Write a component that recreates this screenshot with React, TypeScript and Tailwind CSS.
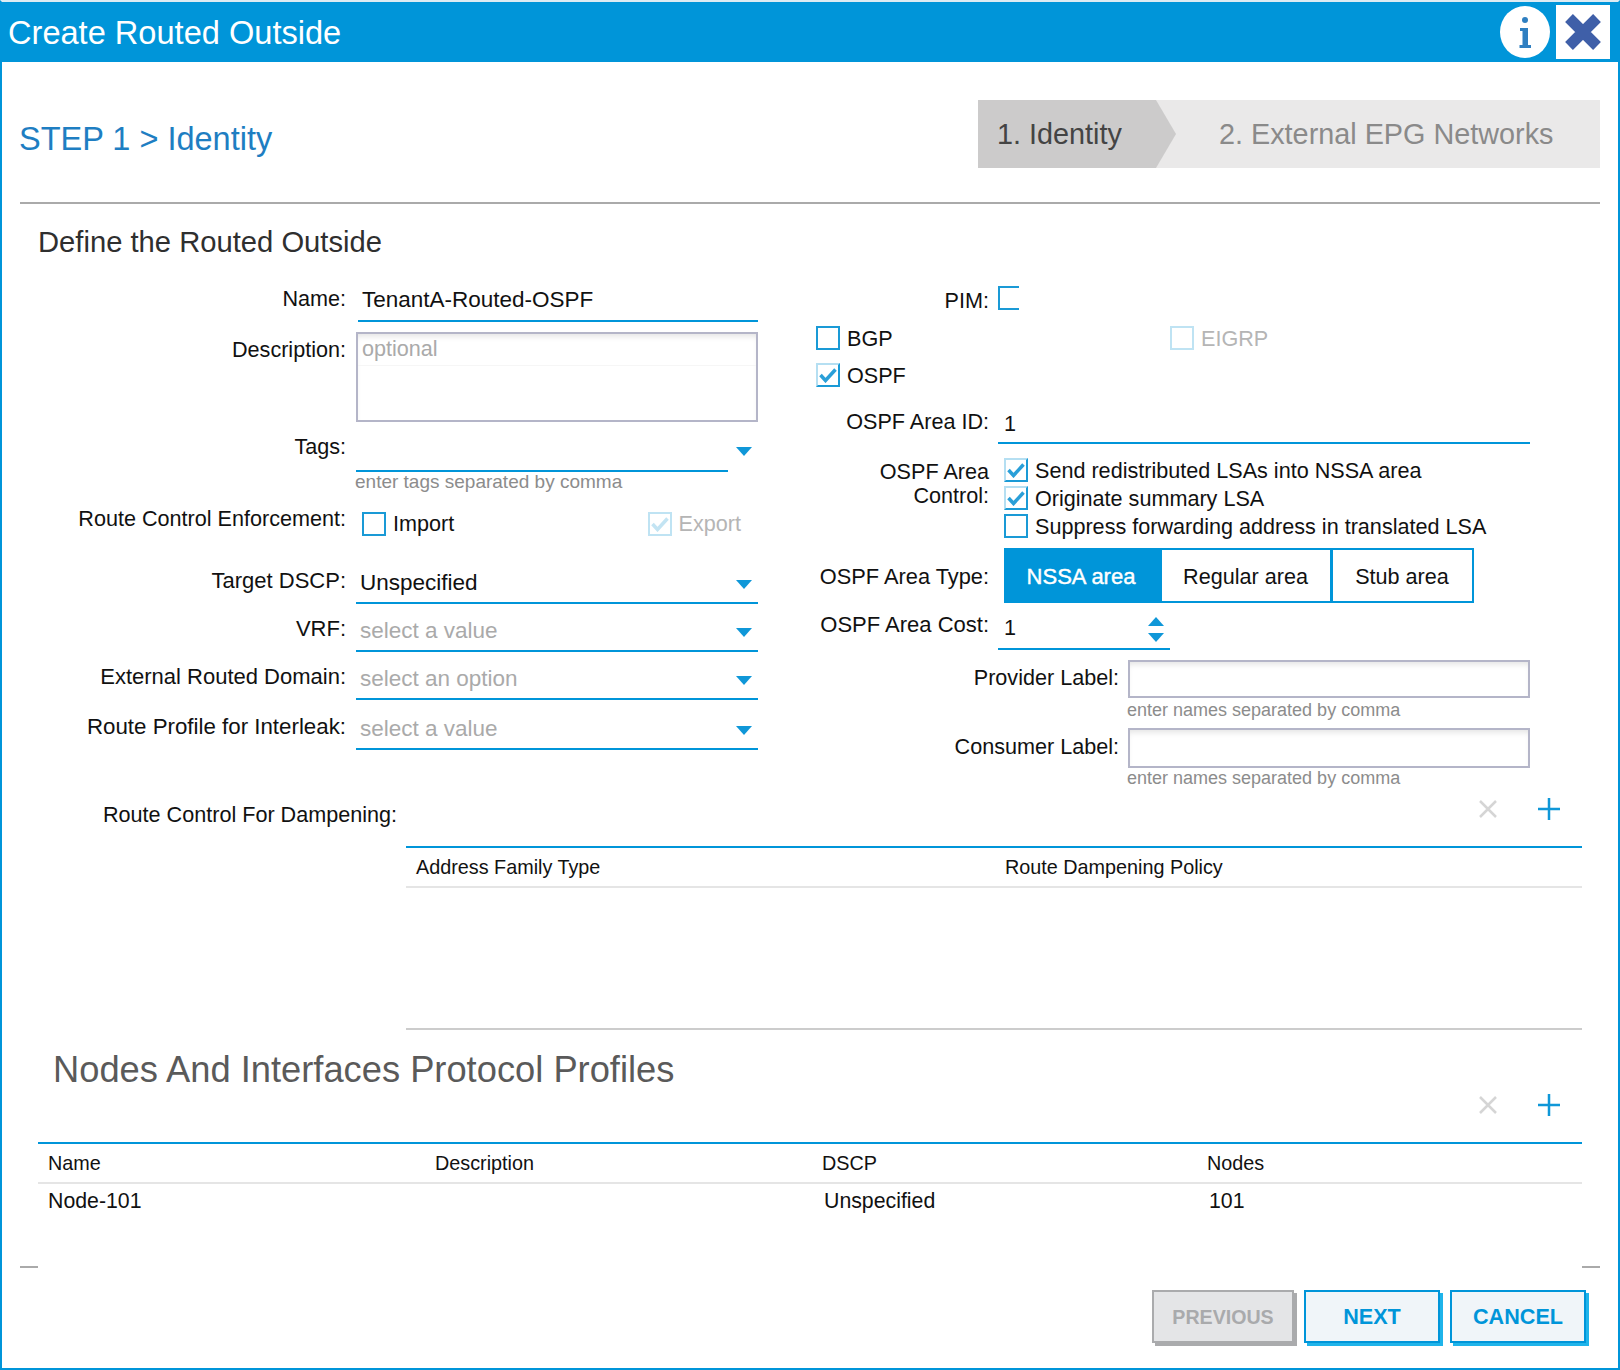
import type { ReactNode } from "react";

function Arrow({ up = false }: { up?: boolean }) {
  return (
    <svg width="16" height="9" viewBox="0 0 16 9" className={up ? "rotate-180" : ""}>
      <path d="M0 0h16L8 9z" fill="#0f97d8" />
    </svg>
  );
}

function Checkbox({ checked = false, muted = false, lift = false }: { checked?: boolean; muted?: boolean; lift?: boolean }) {
  return (
    <span
      className={[
        "flex h-[24px] w-[24px] shrink-0 items-center justify-center border-2",
        lift ? "-mt-[2px]" : "",
        muted ? "border-[#bfe3f3]" : checked ? "border-[#b5dff2] border-r-[#1a9ad6] border-b-[#1a9ad6]" : "border-[#1a9ad6]",
      ].join(" ")}
    >
      {checked && (
        <svg width="18" height="16" viewBox="0 0 18 16">
          <path d="M1.5 8l5 5.5L16.5 2.5" fill="none" stroke={muted ? "#c3e4f3" : "#2a9fd8"} strokeWidth="3.5" />
        </svg>
      )}
    </span>
  );
}

function Option({ label, checked, muted, lift }: { label: string; checked?: boolean; muted?: boolean; lift?: boolean }) {
  return (
    <div className="flex items-center gap-[7px]">
      <Checkbox checked={checked} muted={muted} lift={lift} />
      <span className={muted ? "text-[#b5b5b5]" : ""}>{label}</span>
    </div>
  );
}

function Label({ children, width, className = "" }: { children: ReactNode; width: string; className?: string }) {
  return <div className={`${width} shrink-0 text-right ${className}`}>{children}</div>;
}

function SelectRow({ label, value, placeholder, tall }: { label: string; value?: string; placeholder?: string; tall?: boolean }) {
  return (
    <div className={`flex items-end gap-[10px] ${tall ? "h-[50px]" : "h-[48px]"}`}>
      <Label width="w-[326px]" className={`pb-[10px] ${tall ? "text-[22.3px]" : "text-[22px]"}`}>{label}</Label>
      <div className="flex h-full w-[402px] items-end justify-between border-b-2 border-[#0095d9] pb-[6px] pl-[4px] pr-[6px] text-[22.5px]">
        <span className={value ? "" : "text-[#aaaaaa]"}>{value ?? placeholder}</span>
        <span className="mb-[7px]"><Arrow /></span>
      </div>
    </div>
  );
}

function TextBox({ className = "" }: { className?: string }) {
  return <div className={`w-[402px] border-2 border-[#b4b5c8] shadow-[inset_0_5px_6px_-3px_rgba(0,0,0,0.12)] ${className}`} />;
}

function TableActions() {
  return (
    <div className="flex h-[22px] items-center justify-end gap-[41px] pr-[22px]">
      <svg width="18" height="18" viewBox="0 0 18 18">
        <path d="M1 1l16 16M17 1L1 17" stroke="#d5d5d5" strokeWidth="2.5" />
      </svg>
      <svg width="22" height="22" viewBox="0 0 22 22">
        <path d="M0 11h22M11 0v22" stroke="#0f97d8" strokeWidth="2.5" />
      </svg>
    </div>
  );
}

function LeftColumn() {
  return (
    <div className="w-[796px] shrink-0">
      <div className="flex h-[42px] items-end gap-[12px]">
        <Label width="w-[326px]" className="pb-[10px]">Name:</Label>
        <div className="h-full w-[400px] border-b-2 border-[#0095d9] pb-[8px] pl-[4px] pt-[7px] text-[22.5px]">TenantA-Routed-OSPF</div>
      </div>
      <div className="mt-[10px] flex gap-[10px]">
        <Label width="w-[326px]" className="pt-[5px]">Description:</Label>
        <div className="h-[90px] w-[402px] border-2 border-[#b4b5c8] shadow-[inset_0_5px_6px_-3px_rgba(0,0,0,0.12)]">
          <div className="h-[32px] border-b border-[#f6f6f6] pl-[4px] pt-[2px] text-[#aaaaaa]">optional</div>
        </div>
      </div>
      <div className="flex h-[50px] items-end gap-[10px]">
        <Label width="w-[326px]" className="pb-[12px]">Tags:</Label>
        <div className="relative h-full w-[372px] border-b-2 border-[#0095d9]">
          <span className="absolute left-[380px] top-[25px]"><Arrow /></span>
        </div>
      </div>
      <div className="ml-[335px] h-[20px] text-[19px] leading-[20px] text-[#8c8c8c]">enter tags separated by comma</div>
      <div className="mt-[16px] flex h-[36px] items-start gap-[10px]">
        <Label width="w-[326px]" className="-mt-[2px]">Route Control Enforcement:</Label>
        <div className="flex w-[385px] justify-between pl-[6px] pt-[3px]">
          <Option label="Import" />
          <Option label="Export" checked muted />
        </div>
      </div>
      <div className="mt-[12px]">
        <SelectRow label="Target DSCP:" value="Unspecified" />
        <SelectRow label="VRF:" placeholder="select a value" />
        <SelectRow label="External Routed Domain:" placeholder="select an option" />
        <SelectRow label="Route Profile for Interleak:" placeholder="select a value" tall />
      </div>
    </div>
  );
}

function RightColumn() {
  return (
    <div className="w-[766px]">
      <div className="flex h-[36px] items-start gap-[9px]">
        <Label width="w-[173px]" className="pt-[8px]">PIM:</Label>
        <span className="mt-[6px] h-[24px] w-[21px] border-2 border-r-0 border-[#1a9ad6]" />
      </div>
      <div className="mt-[10px] flex">
        <div className="w-[354px]"><Option label="BGP" lift /></div>
        <Option label="EIGRP" muted lift />
      </div>
      <div className="mt-[11px]"><Option label="OSPF" checked lift /></div>
      <div className="mt-[9px] flex h-[46px] items-end gap-[9px]">
        <Label width="w-[173px]" className="pb-[9px]">OSPF Area ID:</Label>
        <div className="h-full w-[532px] border-b-2 border-[#0095d9] pb-[6px] pl-[6px] pt-[13px]">1</div>
      </div>
      <div className="mt-[14px] flex gap-[15px]">
        <Label width="w-[173px]" className="pt-[2px] leading-[24px]">OSPF Area<br />Control:</Label>
        <div className="flex flex-col gap-[2px]">
          <Option label="Send redistributed LSAs into NSSA area" checked lift />
          <Option label="Originate summary LSA" checked lift />
          <Option label="Suppress forwarding address in translated LSA" lift />
        </div>
      </div>
      <div className="mt-[8px] flex h-[55px] items-center gap-[15px]">
        <Label width="w-[173px]" className="pt-[3px] text-[21.8px]">OSPF Area Type:</Label>
        <div className="flex h-full border-2 border-[#0095d9]">
          <div className="flex w-[156px] items-center justify-center bg-[#0095d9] pr-[6px] pt-[3px] text-[22px] text-white [-webkit-text-stroke:0.4px_white]">NSSA area</div>
          <div className="flex w-[171px] items-center justify-center border-r-[3px] border-[#0095d9] pr-[1px] pt-[3px]">Regular area</div>
          <div className="flex w-[139px] items-center justify-center pr-[1px] pt-[3px]">Stub area</div>
        </div>
      </div>
      <div className="flex h-[47px] items-end gap-[9px]">
        <Label width="w-[173px]" className="pb-[12px] text-[22px]">OSPF Area Cost:</Label>
        <div className="flex h-full w-[172px] items-end justify-between border-b-2 border-[#0095d9] pb-[6px] pl-[6px] pr-[6px]">
          <span className="pb-[1px]">1</span>
          <span className="flex flex-col gap-[7px]">
            <Arrow up />
            <Arrow />
          </span>
        </div>
      </div>
      <div className="mt-[10px] flex gap-[9px]">
        <Label width="w-[303px]" className="pt-[5px]">Provider Label:</Label>
        <div>
          <TextBox className="h-[38px]" />
          <div className="-ml-[1px] h-[30px] text-[18px] leading-[24px] text-[#8c8c8c]">enter names separated by comma</div>
        </div>
      </div>
      <div className="flex gap-[9px]">
        <Label width="w-[303px]" className="pt-[6px]">Consumer Label:</Label>
        <div>
          <TextBox className="h-[40px]" />
          <div className="-ml-[1px] h-[23px] text-[18px] leading-[20px] text-[#8c8c8c]">enter names separated by comma</div>
        </div>
      </div>
    </div>
  );
}

export default function App() {
  return (
    <div className="flex h-[1370px] w-[1620px] flex-col overflow-hidden border-x-2 border-b-2 border-t-2 border-[#0095d9] border-t-[#dcebf3] bg-white text-[21.6px] leading-[26px] text-[#111111] [font-family:'Liberation_Sans',sans-serif]">
      <header className="flex h-[60px] shrink-0 items-center justify-between bg-[#0095d9] pl-[6px] pr-[8px]">
        <h1 className="pt-[2px] text-[32.6px] leading-[40px] text-white">Create Routed Outside</h1>
        <div className="flex items-center gap-[6px]">
          <svg width="50" height="52" viewBox="0 0 50 52">
            <ellipse cx="25" cy="26" rx="25" ry="26" fill="#fff" />
            <circle cx="25" cy="14" r="3" fill="#2f7fc1" />
            <path d="M20 22h8v17h3v3H19.500v-3H22.500V25H20z" fill="#2f7fc1" />
          </svg>
          <div className="flex h-[54px] w-[54px] items-center justify-center bg-white">
            <svg width="38" height="38" viewBox="0 0 38 38">
              <path d="M5 5l28 28M33 5L5 33" stroke="#3f5fa8" strokeWidth="11" />
            </svg>
          </div>
        </div>
      </header>

      <main className="flex flex-1 flex-col px-[18px]">
        <div className="flex items-center justify-between pt-[38px]">
          <div className="-ml-[1px] pt-[10px] text-[32.5px] leading-[40px] text-[#1e7ec2]">STEP 1 &gt; Identity</div>
          <div className="relative flex h-[68px] w-[622px] items-center bg-[#eae9e9] text-[28.8px] text-[#8a8a8a]">
            <div className="flex h-full w-[198px] items-center bg-[#cccbcb] pl-[19px] text-[#444444] [clip-path:polygon(0_0,178px_0,100%_50%,178px_100%,0_100%)]">
              1. Identity
            </div>
            <div className="pl-[43px]">2. External EPG Networks</div>
          </div>
        </div>
        <div className="mt-[34px] h-[2px] bg-[#aaaaaa]" />

        <h2 className="ml-[18px] mt-[20px] text-[29.2px] leading-[36px] text-[#2f2f2f]">Define the Routed Outside</h2>

        <div className="mt-[20px] flex">
          <LeftColumn />
          <RightColumn />
        </div>

        <div className="flex h-[55px] items-start justify-between pl-[83px] pr-[18px]">
          <div className="pt-[11px]">Route Control For Dampening:</div>
          <div className="pt-[7px]"><TableActions /></div>
        </div>

        <div className="ml-[386px] mr-[18px] flex h-[184px] shrink-0 flex-col border-y-2 border-b-[#cccccc] border-t-[#0095d9]">
          <div className="flex h-[40px] items-center border-b-2 border-[#e5e5e5] pl-[10px] text-[19.8px]">
            <div className="w-[589px]">Address Family Type</div>
            <div>Route Dampening Policy</div>
          </div>
        </div>

        <div className="ml-[33px] mt-[18px] text-[36.3px] leading-[44px] text-[#5a5a5a]">Nodes And Interfaces Protocol Profiles</div>
        <div className="mr-[18px] mt-[2px]"><TableActions /></div>

        <div className="ml-[18px] mr-[18px] mt-[26px] border-t-2 border-[#0095d9]">
          <div className="flex h-[40px] items-center border-b-2 border-[#e5e5e5] pl-[10px] text-[19.8px]">
            <div className="w-[387px]">Name</div>
            <div className="w-[387px]">Description</div>
            <div className="w-[385px]">DSCP</div>
            <div>Nodes</div>
          </div>
          <div className="flex h-[36px] items-center pb-[2px] pl-[10px] text-[21.3px]">
            <div className="w-[387px]">Node-101</div>
            <div className="w-[387px]" />
            <div className="w-[386px] pl-[2px]">Unspecified</div>
            <div className="pl-[1px]">101</div>
          </div>
        </div>

        <div className="mt-[46px] flex justify-between">
          <div className="h-[2px] w-[18px] bg-[#aaaaaa]" />
          <div className="h-[2px] w-[18px] bg-[#aaaaaa]" />
        </div>

        <div className="mt-[22px] flex justify-end gap-[10px] pr-[14px] text-[21.6px] font-bold">
          <div className="flex h-[53px] w-[142px] items-center justify-center border-2 border-[#aaabad] bg-[#e4e5e7] text-[19.6px] text-[#a9aaac] shadow-[3px_3px_0_#aaabad]">PREVIOUS</div>
          <div className="flex h-[53px] w-[136px] items-center justify-center border-2 border-[#0095d9] bg-[#f0f5f9] text-[#0095d9] shadow-[3px_3px_0_#1fb4ea]">NEXT</div>
          <div className="flex h-[53px] w-[136px] items-center justify-center border-2 border-[#0095d9] bg-[#f0f5f9] text-[#0095d9] shadow-[3px_3px_0_#1fb4ea]">CANCEL</div>
        </div>
      </main>
    </div>
  );
}
